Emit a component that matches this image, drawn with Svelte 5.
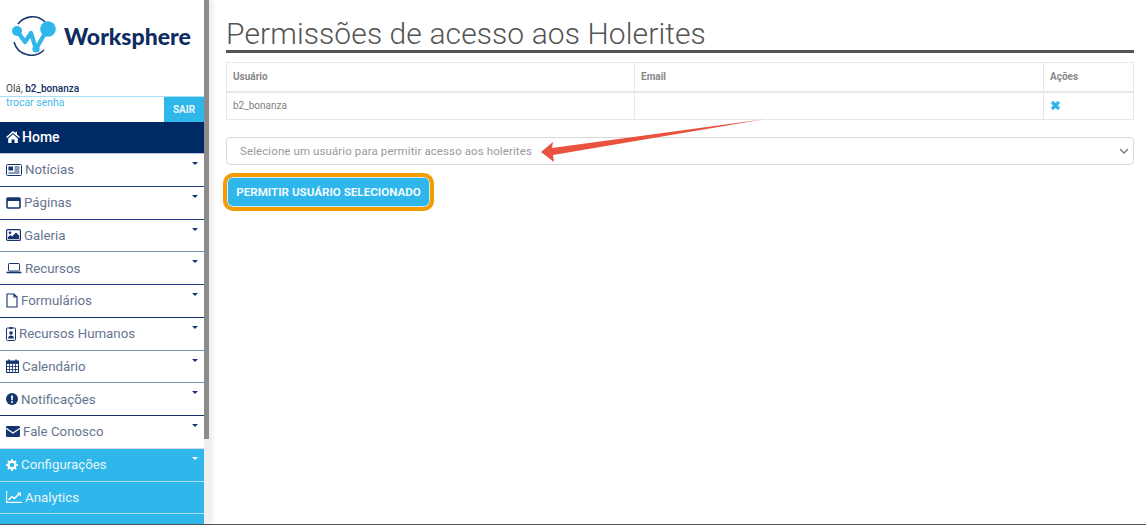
<script>
	const menu = [
		{ label: 'Notícias', icon: 'news', line: '#1f3f7f' },
		{ label: 'Páginas', icon: 'window', line: '#1f3f7f' },
		{ label: 'Galeria', icon: 'image', line: '#7f93b5' },
		{ label: 'Recursos', icon: 'laptop', line: '#1f3f7f' },
		{ label: 'Formulários', icon: 'file', line: '#12306a' },
		{ label: 'Recursos Humanos', icon: 'badge', line: '#7f93b5' },
		{ label: 'Calendário', icon: 'calendar', line: '#7f93b5' },
		{ label: 'Notificações', icon: 'alert', line: '#12306a' },
		{ label: 'Fale Conosco', icon: 'mail', line: '#d5dbe5' }
	]

	const extras = [
		{ label: 'Configurações', icon: 'cog', caret: true },
		{ label: 'Analytics', icon: 'chart', caret: false },
		{ label: '', icon: '', caret: false }
	]
</script>

{#snippet icon(name)}
	{#if name === 'news'}
		<svg class="ic" width="16" height="12" viewBox="0 0 16 12"><rect x=".5" y=".5" width="15" height="11" rx="1" fill="none" stroke="currentColor"/><rect x="2.5" y="2.5" width="4.5" height="4" fill="currentColor"/><path d="M8.5 3h5M8.5 5h5M8.5 7h5M2.5 9h11" stroke="currentColor"/></svg>
	{:else if name === 'window'}
		<svg class="ic" width="15" height="12" viewBox="0 0 15 12"><rect x="1" y="1" width="13" height="10" rx="1" fill="none" stroke="currentColor" stroke-width="1.6"/><rect x="1" y="1" width="13" height="3" fill="currentColor"/></svg>
	{:else if name === 'image'}
		<svg class="ic" width="15" height="12" viewBox="0 0 15 12"><rect x=".6" y=".6" width="13.8" height="10.8" rx="1" fill="none" stroke="currentColor" stroke-width="1.2"/><circle cx="4" cy="3.8" r="1.3" fill="currentColor"/><path d="M2 10V8l2.5-2 1.5 1.5L10 3.5l3 3V10z" fill="currentColor"/></svg>
	{:else if name === 'laptop'}
		<svg class="ic" width="16" height="12" viewBox="0 0 16 12"><rect x="2.5" y="1.5" width="11" height="7.5" rx=".8" fill="none" stroke="currentColor"/><path d="M.5 10.5h15" stroke="currentColor" stroke-width="1.6"/></svg>
	{:else if name === 'file'}
		<svg class="ic" width="12" height="15" viewBox="0 0 12 15"><path d="M1 1h7l3 3v10H1zM8 1v3h3" fill="none" stroke="currentColor" stroke-width="1.1"/></svg>
	{:else if name === 'badge'}
		<svg class="ic" width="10" height="14" viewBox="0 0 10 14"><rect x=".5" y="1" width="9" height="12.5" rx="1" fill="none" stroke="currentColor"/><path d="M3.5 0h3v2h-3z" fill="currentColor"/><circle cx="5" cy="6" r="1.8" fill="currentColor"/><path d="M2 11.5c0-4 6-4 6 0z" fill="currentColor"/></svg>
	{:else if name === 'calendar'}
		<svg class="ic" width="13" height="14" viewBox="0 0 13 14"><rect x=".5" y="2" width="12" height="11.5" fill="none" stroke="currentColor"/><path d="M.5 4.5h12M.5 7.5h12M.5 10.5h12M3.5 5v8M6.5 5v8M9.5 5v8" stroke="currentColor" stroke-width=".8"/><path d="M3 .5v3M10 .5v3" stroke="currentColor" stroke-width="1.6"/><rect x="1" y="2" width="11" height="2.5" fill="currentColor"/></svg>
	{:else if name === 'alert'}
		<svg class="ic" width="12" height="12" viewBox="0 0 12 12"><circle cx="6" cy="6" r="6" fill="currentColor"/><path d="M5 2.5h2L6.7 7.2H5.3zM5 8.2h2v1.6H5z" fill="#fff"/></svg>
	{:else if name === 'mail'}
		<svg class="ic" width="14" height="11" viewBox="0 0 14 11"><rect width="14" height="11" rx="1" fill="currentColor"/><path d="M0 2.3 7 7l7-4.7" fill="none" stroke="#fff" stroke-width="1.1"/></svg>
	{:else if name === 'cog'}
		<svg class="ic" width="12" height="12" viewBox="0 0 12 12"><circle cx="6" cy="6" r="3.4" fill="none" stroke="currentColor" stroke-width="2.4"/><path d="M6 0v12M0 6h12M1.8 1.8l8.4 8.4M10.2 1.8l-8.4 8.4" stroke="currentColor" stroke-width="1.7" stroke-dasharray="2.2 7.6"/></svg>
	{:else if name === 'chart'}
		<svg class="ic" width="16" height="12" viewBox="0 0 16 12"><path d="M.6 0v11.4H16" fill="none" stroke="currentColor" stroke-width="1.1"/><path d="M2.5 9l3.5-3.5 2.5 2L13.5 2.5" fill="none" stroke="currentColor" stroke-width="1.6"/><path d="M11 1.5h4v4z" fill="currentColor"/></svg>
	{/if}
{/snippet}

<div class="page">
	<aside class="sidebar">
		<div class="logo">
			<svg width="52" height="40" viewBox="0 0 52 40">
				<path d="M7 8A18 18 0 0 1 34 6M3 26A18 18 0 0 0 33 34" fill="none" stroke="#1b3a6f" stroke-width="1.6"/>
				<path d="M6 15l8 11 6-9 5 16L37 12" fill="none" stroke="#2fb6ea" stroke-width="4.2" stroke-linejoin="round"/>
				<circle cx="6" cy="15" r="5" fill="#2fb6ea"/>
				<circle cx="37" cy="13" r="7.8" fill="#2fb6ea"/>
				<circle cx="25" cy="33" r="3.6" fill="#2fb6ea"/>
			</svg>
			<span class="brand">Worksphere</span>
		</div>
		<div class="hello">Olá, <b>b2_bonanza</b></div>
		<div class="account">
			<a class="pass" href="#top">trocar senha</a>
			<span class="out">SAIR</span>
		</div>
		<div class="home">
			<svg class="ic" width="14" height="12" viewBox="0 0 14 12"><path d="M7 0 0 6l1 1 6-5 6 5 1-1-3-2.6V.8H9.5v1.3zM2.2 7.4V12h3.3V8.5h3V12h3.3V7.4L7 3.3z" fill="currentColor"/></svg>
			Home
		</div>
		<nav>
			{#each menu as item}
				<div class="item" style="border-color: {item.line}">
					{@render icon(item.icon)}
					<span>{item.label}</span>
					<i class="caret"></i>
				</div>
			{/each}
			{#each extras as item}
				<div class="item blue">
					{@render icon(item.icon)}
					<span>{item.label}</span>
					{#if item.caret}<i class="caret"></i>{/if}
				</div>
			{/each}
		</nav>
	</aside>
	<div class="track"><div class="thumb"></div></div>

	<main class="content">
		<h1>Permissões de acesso aos Holerites</h1>
		<table>
			<thead>
				<tr><th class="c1">Usuário</th><th class="c2">Email</th><th>Ações</th></tr>
			</thead>
			<tbody>
				<tr>
					<td>b2_bonanza</td>
					<td></td>
					<td><svg class="x" width="11" height="11" viewBox="0 0 11 11"><path d="M2 2l7 7M9 2l-7 7" stroke="#2fb6ea" stroke-width="3.2"/></svg></td>
				</tr>
			</tbody>
		</table>
		<div class="select">
			<span>Selecione um usuário para permitir acesso aos holerites</span>
			<svg width="10" height="6" viewBox="0 0 10 6"><path d="M1 1l4 4 4-4" fill="none" stroke="#777" stroke-width="1.3"/></svg>
		</div>
		<button>PERMITIR USUÁRIO SELECIONADO</button>
	</main>

	<svg class="arrow" width="240" height="50" viewBox="0 0 240 50">
		<path d="M1 33 13 23l-1 6L225 0 13 36l1 7z" fill="#e8523f"/>
	</svg>
</div>

<style>
	:global(body) {
		margin: 0;
		background: #fff;
	}

	.page {
		position: relative;
		display: flex;
		width: 1146px;
		height: 525px;
		overflow: hidden;
		box-sizing: border-box;
		border-bottom: 1px solid #4a5a4a;
		font-family: Roboto, sans-serif;
	}

	.sidebar {
		flex: none;
		width: 204px;
		color: #66758f;
	}

	.track {
		flex: none;
		width: 5px;
		background: #f0f0f0;
		box-shadow: 3px 0 5px rgba(0, 0, 0, 0.1);
	}

	.thumb {
		height: 439px;
		background: #8c8c8c;
	}

	.logo {
		display: flex;
		align-items: center;
		gap: 1px;
		height: 72px;
		padding-left: 11px;
	}

	.brand {
		font-family: Lato, sans-serif;
		font-weight: 900;
		font-size: 23px;
		color: #0f2c62;
	}

	.hello {
		margin-top: 9px;
		padding-left: 6px;
		height: 15px;
		font-size: 10px;
		line-height: 15px;
		color: #444;
	}

	.hello b {
		font-weight: 500;
		color: #0f2c62;
	}

	.account {
		display: flex;
		justify-content: space-between;
		height: 25px;
		border-top: 1px solid #a5e0f6;
	}

	.pass {
		padding-left: 6px;
		font-size: 10.5px;
		line-height: 12px;
		color: #45bdec;
		text-decoration: none;
	}

	.out {
		width: 40px;
		background: #2fb6ea;
		color: #e8f7fd;
		font-size: 10px;
		font-weight: 700;
		line-height: 25px;
		text-align: center;
	}

	.home {
		display: flex;
		align-items: center;
		gap: 2px;
		box-sizing: border-box;
		height: 32px;
		padding: 0 0 2px 6px;
		border-bottom: 1px solid #b9c3d5;
		background: #002a66;
		color: #fff;
		font-size: 14px;
		font-weight: 500;
	}

	.item {
		position: relative;
		display: flex;
		align-items: center;
		gap: 3px;
		box-sizing: border-box;
		height: 32.75px;
		padding-left: 6px;
		border-bottom: 1px solid;
		font-size: 13.3px;
	}

	.ic {
		flex: none;
		color: #14356f;
	}

	.home .ic,
	.blue .ic {
		color: #fff;
	}

	.blue {
		background: #2fb6ea;
		color: #e6f6fd;
		border-color: #a5e0f6;
	}

	.caret {
		position: absolute;
		top: 8px;
		right: 6px;
		border: 3.5px solid transparent;
		border-top: 3.5px solid #14356f;
		border-bottom: 0;
	}

	.blue .caret {
		border-top-color: #fff;
	}

	.content {
		flex: 1;
		padding: 0 12px 0 17px;
		min-width: 0;
	}

	h1 {
		margin: 0;
		height: 50px;
		box-sizing: content-box;
		border-bottom: 3px solid #555;
		color: #555;
		font-size: 30px;
		font-weight: 300;
		line-height: 68px;
		letter-spacing: 0.1px;
		white-space: nowrap;
	}

	table {
		width: 100%;
		margin-top: 9px;
		border-collapse: collapse;
		table-layout: fixed;
		border: 1px solid #ddd;
		color: #808080;
		font-size: 10px;
		text-align: left;
	}

	th,
	td {
		height: 28px;
		padding: 0 6px;
		border: 1px solid #e8e8e8;
		box-sizing: border-box;
	}

	th {
		height: 29px;
		font-weight: 700;
		color: #888;
		border-bottom-width: 2px;
	}

	.c1 {
		width: 408px;
	}

	.c2 {
		width: 409px;
	}

	.x {
		display: block;
	}

	.select {
		display: flex;
		align-items: center;
		justify-content: space-between;
		box-sizing: border-box;
		height: 28px;
		margin-top: 17px;
		padding: 0 4px 0 13px;
		border: 1px solid #d9d9d9;
		border-radius: 4px;
		color: #9a9a9a;
		font-size: 11.5px;
		letter-spacing: 0.1px;
	}

	button {
		display: block;
		box-sizing: border-box;
		width: 211px;
		height: 38px;
		margin: 8px 0 0 -3px;
		padding: 0 0 1px;
		border: 4px solid #f59c00;
		border-radius: 10px;
		background: #2fb6ea;
		box-shadow: inset 0 0 0 1px #cdeefa;
		color: #eefaff;
		font-family: inherit;
		font-size: 11.6px;
		font-weight: 700;
	}

	.arrow {
		position: absolute;
		left: 540px;
		top: 119px;
	}
</style>
